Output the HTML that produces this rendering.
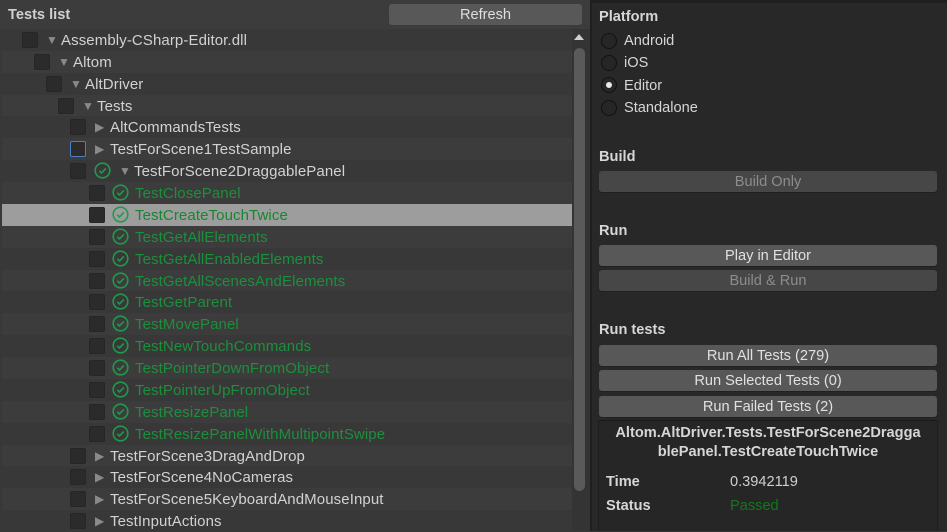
<!DOCTYPE html>
<html><head><meta charset="utf-8"><style>
*{margin:0;padding:0;box-sizing:border-box}
body{width:947px;height:531px;overflow:hidden;background:#383838;font-family:"Liberation Sans",sans-serif;font-size:14.6px;line-height:19px;color:#d2d2d2;position:relative}
.a{position:absolute}
.row{position:absolute;left:2px;width:570px;height:22px;font-size:15px}
.cb{position:absolute;width:16px;height:16px;background:#2b2b2b;border:1px solid #262626;border-radius:2px;top:3px}
.t{position:absolute;top:2px;white-space:nowrap;line-height:20px;letter-spacing:0.1px}
.ar{position:absolute;top:3px;font-size:12px;color:#8a8a8a;line-height:17px}
.g{color:#1c8f3c}
.ic{position:absolute;top:2px;width:17px;height:17px}
.btn{position:absolute;left:599px;width:338px;height:21px;background:#585858;border-radius:3px;text-align:center;line-height:23px;color:#e0e0e0;box-shadow:0 1px 0 #202020}
.dis{background:#474747;color:#8c8c8c}
.h{position:absolute;left:599px;font-weight:bold;color:#d6d6d6}
.rad{position:absolute;left:601px;width:16px;height:16px;border-radius:50%;background:#262626;border:1px solid #111}
.rl{position:absolute;left:624px;color:#d6d6d6}
</style></head><body>
<div class="a" style="left:0;top:0;width:590px;height:29px;background:#3c3c3c"></div>
<div class="a" style="left:8px;top:6px;font-weight:bold;color:#d0d0d0">Tests list</div>
<div class="a" style="left:389px;top:4px;width:193px;height:21px;background:#585858;border-radius:3px;text-align:center;line-height:22px;color:#dedede">Refresh</div>
<div id="rows"></div>
<div class="a" style="left:572px;top:29px;width:18px;height:502px;background:#343434"></div>
<div class="a" style="left:574px;top:34px;width:0;height:0;border-left:5px solid transparent;border-right:5px solid transparent;border-bottom:6px solid #cfcfcf"></div>
<div class="a" style="left:574px;top:48px;width:11px;height:443px;background:#5a5a5a;border-radius:6px"></div>
<div class="a" style="left:590px;top:0;width:357px;height:531px;background:#1f1f1f"></div>
<div class="a" style="left:592px;top:3px;width:355px;height:528px;background:#282828"></div>
<div class="h" style="top:8px">Platform</div>
<div class="rad" style="top:33px"></div><div class="rl" style="top:32px">Android</div>
<div class="rad" style="top:55px"></div><div class="rl" style="top:54px">iOS</div>
<div class="rad" style="top:77px"><div style="position:absolute;left:4px;top:4px;width:6px;height:6px;border-radius:50%;background:#e8e8e8"></div></div><div class="rl" style="top:77px">Editor</div>
<div class="rad" style="top:100px"></div><div class="rl" style="top:99px">Standalone</div>
<div class="h" style="top:148px">Build</div>
<div class="btn dis" style="top:171px">Build Only</div>
<div class="h" style="top:222px">Run</div>
<div class="btn" style="top:245px">Play in Editor</div>
<div class="btn dis" style="top:270px">Build &amp; Run</div>
<div class="h" style="top:321px">Run tests</div>
<div class="btn" style="top:345px">Run All Tests (279)</div>
<div class="btn" style="top:370px">Run Selected Tests (0)</div>
<div class="btn" style="top:396px">Run Failed Tests (2)</div>
<div class="a" style="left:598px;top:420px;width:340px;height:111px;background:#262626;border-top:1px solid #1a1a1a;border-left:1px solid #1f1f1f;border-right:1px solid #1f1f1f"></div>
<div class="a" style="left:598px;top:424px;width:340px;text-align:center;font-weight:bold;color:#d6d6d6;line-height:19px">Altom.AltDriver.Tests.TestForScene2Dragga<br>blePanel.TestCreateTouchTwice</div>
<div class="a" style="left:606px;top:473px;font-weight:bold;color:#d6d6d6">Time</div>
<div class="a" style="left:730px;top:473px;color:#cfcfcf">0.3942119</div>
<div class="a" style="left:606px;top:497px;font-weight:bold;color:#d6d6d6">Status</div>
<div class="a" style="left:730px;top:497px;color:#0f7a1a">Passed</div>
<script>
var R=[[22,'d',0,61,'Assembly-CSharp-Editor.dll'],[34,'d',0,73,'Altom'],[46,'d',0,85,'AltDriver'],[58,'d',0,97,'Tests'],[70,'r',0,110,'AltCommandsTests'],[70,'r',0,110,'TestForScene1TestSample',1],[70,'d',94,134,'TestForScene2DraggablePanel']];
['TestClosePanel','TestCreateTouchTwice','TestGetAllElements','TestGetAllEnabledElements','TestGetAllScenesAndElements','TestGetParent','TestMovePanel','TestNewTouchCommands','TestPointerDownFromObject','TestPointerUpFromObject','TestResizePanel','TestResizePanelWithMultipointSwipe'].forEach(function(n){R.push([89,'',112,135,n,0,1])});
['TestForScene3DragAndDrop','TestForScene4NoCameras','TestForScene5KeyboardAndMouseInput','TestInputActions'].forEach(function(n){R.push([70,'r',0,110,n])});
var h='';R.forEach(function(r,i){var top=29+i*21.87,sel=i==8;var bg=sel?'#9d9d9d':(i%2?'#3c3c3c':'#383838');
h+='<div class="row" style="top:'+top+'px;background:'+bg+'">';
h+='<div class="cb" style="left:'+(r[0]-2)+'px;'+(r[5]?'border:1px solid #4a7fc1;':'')+'"></div>';
if(r[2])h+='<svg class="ic" style="left:'+(r[2]-2)+'px" viewBox="0 0 17 17"><circle cx="8.5" cy="8.5" r="7.3" fill="none" stroke="#1f9a4a" stroke-width="1.6"/><path d="M5.3 8.8l2.2 2.2 4.3-4.6" fill="none" stroke="#1f9a4a" stroke-width="1.6"/></svg>';
if(r[1]){var ax=r[3]-15;h+='<div class="ar" style="left:'+(ax-2)+'px">'+(r[1]=='d'?'▼':'▶')+'</div>';}
h+='<div class="t'+(r[6]?' g':'')+'" style="left:'+(r[3]-2)+'px;'+(sel?'color:#17862f':'')+'">'+r[4]+'</div></div>';});
document.getElementById('rows').innerHTML=h;
</script>
</body></html>
